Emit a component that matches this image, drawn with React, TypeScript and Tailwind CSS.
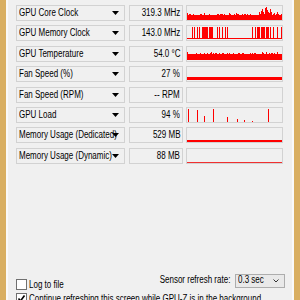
import React from "react";

const RED = "#ff0000";

function rng(seed: number) {
  let s = seed;
  return () => {
    s = (s * 16807) % 2147483647;
    return (s - 1) / 2147483646;
  };
}

const W = 95;
const H = 14;

function CoreGraph() {
  const r = rng(7);
  const cols: React.ReactNode[] = [];
  for (let x = 0; x < W; x++) {
    const v = r();
    const lift = v < 0.12 ? 2 : v < 0.4 ? 1 : 0;
    if (lift) cols.push(<rect key={"n" + x} x={x} y={9 - lift} width={1} height={lift} fill={RED} />);
  }
  const big: [number, number][] = [
    [72, 6], [74, 5], [75, 3], [76, 6], [78, 2], [79, 1], [80, 4], [81, 6], [83, 3], [84, 6], [90, 6],
  ];
  return (
    <svg width={W} height={H} viewBox={`0 0 ${W} ${H}`} shapeRendering="crispEdges">
      <rect x={0} y={9} width={W} height={4.5} fill={RED} />
      {cols}
      {big.map(([x, t]) => (
        <rect key={"b" + x} x={x} y={t} width={1} height={9 - t} fill={RED} />
      ))}
    </svg>
  );
}

function MemClockGraph() {
  const xs = [
    5, 7, 10, 12, 15, 16, 17, 18, 19, 20, 22, 23, 24, 25, 30, 32, 35, 38, 40, 65, 68, 70, 71, 72, 74, 75, 76, 77, 79,
    80, 81, 83, 86, 90, 94,
  ];
  return (
    <svg width={W} height={H} viewBox={`0 0 ${W} ${H}`} shapeRendering="crispEdges">
      <rect x={0} y={12} width={W} height={1} fill={RED} />
      {xs.map((x) => (
        <rect key={x} x={x} y={1} width={1} height={12} fill={RED} />
      ))}
    </svg>
  );
}

function TempGraph() {
  const r = rng(13);
  const cols: React.ReactNode[] = [];
  for (let x = 0; x < W; x++) {
    const v = r();
    const lift = v < 0.08 ? 2 : v < 0.45 ? 1 : 0;
    if (lift) cols.push(<rect key={x} x={x} y={7 - lift} width={1} height={lift} fill={RED} />);
  }
  return (
    <svg width={W} height={H} viewBox={`0 0 ${W} ${H}`} shapeRendering="crispEdges">
      <rect x={0} y={7} width={W} height={6} fill={RED} />
      {cols}
    </svg>
  );
}

function FanGraph() {
  return (
    <svg width={W} height={H} viewBox={`0 0 ${W} ${H}`} shapeRendering="crispEdges">
      <rect x={0} y={10} width={W} height={3} fill={RED} />
    </svg>
  );
}

function EmptyGraph() {
  return <svg width={W} height={H} viewBox={`0 0 ${W} ${H}`} />;
}

function LoadGraph() {
  const lines: [number, number][] = [
    [1, 13], [10, 12], [17, 6], [26, 13], [40, 5], [50, 3], [57, 2], [65, 1], [81, 13],
  ];
  return (
    <svg width={W} height={H} viewBox={`0 0 ${W} ${H}`} shapeRendering="crispEdges">
      {lines.map(([x, h]) => (
        <rect key={x} x={x} y={14 - h} width={1} height={h} fill={RED} />
      ))}
    </svg>
  );
}

function DedicatedGraph() {
  return (
    <svg width={W} height={H} viewBox={`0 0 ${W} ${H}`} shapeRendering="crispEdges">
      <rect x={0} y={12} width={W} height={1.5} fill={RED} />
      <rect x={89} y={11.5} width={6} height={2} fill={RED} />
    </svg>
  );
}

function DynamicGraph() {
  return (
    <svg width={W} height={H} viewBox={`0 0 ${W} ${H}`} shapeRendering="crispEdges">
      <rect x={0} y={13} width={W} height={1} fill="#f03030" />
    </svg>
  );
}

const rows: { label: string; value: string; graph: React.ReactNode }[] = [
  { label: "GPU Core Clock", value: "319.3 MHz", graph: <CoreGraph /> },
  { label: "GPU Memory Clock", value: "143.0 MHz", graph: <MemClockGraph /> },
  { label: "GPU Temperature", value: "54.0 °C", graph: <TempGraph /> },
  { label: "Fan Speed (%)", value: "27 %", graph: <FanGraph /> },
  { label: "Fan Speed (RPM)", value: "-- RPM", graph: <EmptyGraph /> },
  { label: "GPU Load", value: "94 %", graph: <LoadGraph /> },
  { label: "Memory Usage (Dedicated)", value: "529 MB", graph: <DedicatedGraph /> },
  { label: "Memory Usage (Dynamic)", value: "88 MB", graph: <DynamicGraph /> },
];

function Arrow() {
  return (
    <svg width="7" height="4" viewBox="0 0 7 4" className="shrink-0">
      <path d="M0 0 H7 L3.5 4 Z" fill="#000" />
    </svg>
  );
}

function Text({ children, right }: { children: React.ReactNode; right?: boolean }) {
  return (
    <span
      className={
        right
          ? "inline-block whitespace-nowrap origin-right scale-x-[0.8]"
          : "inline-block whitespace-nowrap origin-left scale-x-[0.8]"
      }
    >
      {children}
    </span>
  );
}

export default function App() {
  return (
    <div
      className="flex w-[300px] h-[300px] overflow-hidden bg-[#f0f0f0] text-[10px] leading-[12px] text-black"
      style={{ fontFamily: '"Liberation Sans", Arial, sans-serif' }}
    >
      <div className="w-[6px] shrink-0 bg-[#d9af62]" />
      <div className="w-[2px] shrink-0 bg-[#fafafa]" />
      <div className="flex-1 min-w-0 overflow-hidden flex flex-col pl-[8px] pt-[5px]">
        <div className="flex flex-col gap-[4.4px]">
          {rows.map((r) => (
            <div key={r.label} className="flex h-[16px]">
              <div className="flex items-center w-[109px] h-[16px] border border-[#d2d2d2] pl-[2px] pr-[5px]">
                <div className="flex-1 min-w-0">
                  <Text>{r.label}</Text>
                </div>
                <Arrow />
              </div>
              <div className="flex items-center justify-end w-[54px] h-[16px] ml-[4px] border border-[#d2d2d2] pr-[2px]">
                <Text right>{r.value}</Text>
              </div>
              <div className="w-[97px] h-[16px] ml-[3px] border border-[#d2d2d2]">{r.graph}</div>
            </div>
          ))}
        </div>
        <div className="mt-[110px] flex items-center h-[14px] w-[269px]">
          <div className="flex items-center mt-[8px]">
            <div className="w-[11px] h-[11px] border border-[#707070] bg-white" />
            <span className="ml-[2px]">
              <Text>Log to file</Text>
            </span>
          </div>
          <div className="ml-auto flex items-center">
            <div className="mr-[5px] -mt-[2px] w-[72px] flex justify-end">
              <Text right>Sensor refresh rate:</Text>
            </div>
            <div className="flex items-center w-[50px] h-[14px] border border-[#adadad] bg-[#e9e9e9] pl-[2px] pr-[5px]">
              <div className="flex-1 min-w-0 -mt-[1px]">
                <Text>0.3 sec</Text>
              </div>
              <svg width="6" height="4" viewBox="0 0 6 4" className="shrink-0">
                <path d="M0.5 0.5 L3 3 L5.5 0.5" fill="none" stroke="#333" strokeWidth="1" />
              </svg>
            </div>
          </div>
        </div>
        <div className="flex items-center mt-[5px] w-[269px]">
          <div className="w-[11px] h-[11px] shrink-0 border border-[#707070] bg-white flex items-center justify-center">
            <svg width="9" height="9" viewBox="0 0 9 9">
              <path d="M1.5 4.5 L3.5 7 L7.5 1.5" fill="none" stroke="#000" strokeWidth="1.6" />
            </svg>
          </div>
          <span className="ml-[2px] min-w-0">
            <Text>Continue refreshing this screen while GPU-Z is in the background</Text>
          </span>
        </div>
      </div>
      <div className="w-[2px] shrink-0 bg-[#fafafa]" />
      <div className="w-[6px] shrink-0 bg-[#d9af62]" />
    </div>
  );
}
